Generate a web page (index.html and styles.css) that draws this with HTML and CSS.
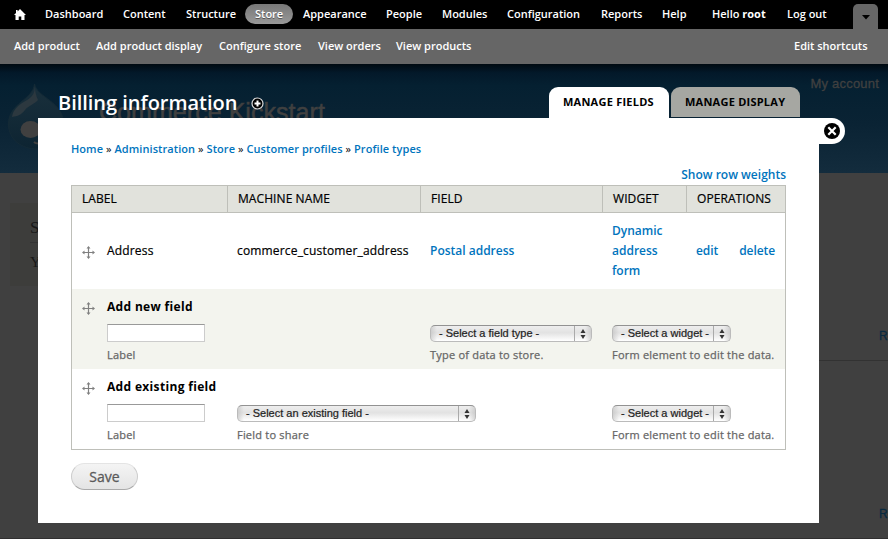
FILE: index.html
```html
<!DOCTYPE html>
<html lang="en">
<head>
<meta charset="utf-8">
<title>Billing information</title>
<link rel="stylesheet" href="styles.css">
</head>
<body>
<svg class="defs" width="0" height="0"><defs>
<symbol id="move" viewBox="0 0 13 13"><path d="M6.500 1v11M1 6.500h11" stroke="#808080" stroke-width="1.200"/><path d="M6.500 0l2 2.500h-4zM6.500 13l2-2.500h-4zM0 6.500l2.500-2v4zM13 6.500l-2.500-2v4z" fill="#808080"/></symbol>
<symbol id="arrows" viewBox="0 0 6 10"><path d="M3 0l2.500 4h-5zM3 10L.5 6h5z" fill="#333"/></symbol>
</defs></svg>
<div class="screen">
  <div class="site">
    <div class="site-header">
      <svg class="drop" width="60" height="74" viewBox="0 0 60 74">
        <defs><linearGradient id="dg" x1="0" y1="0" x2="0" y2="1"><stop offset="0" stop-color="#1a303c"/><stop offset="1" stop-color="#0d2432"/></linearGradient></defs>
        <path d="M28.500 3C31 17 58 20 58 45c0 15-12 23-27 23S2.500 59 2.500 43C2.500 22 27 19 28.500 3z" fill="url(#dg)" stroke="#142a36"/>
        <path d="M28.500 4c1 8-2 12-9 16C12 24 7 29 6 36c6-1 9-2 13-7 4-5 10-6 13-10-2-4-3-9-3.500-15z" fill="#2c383f"/>
        <ellipse cx="24.500" cy="48.500" rx="10" ry="8.500" fill="#404040"/>
        <path d="M28 61q3 3 10 0" stroke="#404040" stroke-width="2" fill="none"/>
      </svg>
      <span class="site-name">Commerce Kickstart</span>
      <span class="account">My account</span>
    </div>
    <div class="site-body">
      <div class="block"><div class="block-title">S</div><div class="block-text">Y</div></div>
      <div class="aside"><div class="aside-cell">Re</div><div class="aside-cell second">Re</div></div>
    </div>
  </div>

  <div class="front">
    <div class="menu">
      <span class="home"><svg width="12" height="11" viewBox="0 0 12 11"><path d="M6 0L12 6H10.500V11H7.300V7.500H4.700V11H1.500V6H0L2 4V1h1.600v1.400z" fill="#fff"/></svg></span>
      <span>Dashboard</span><span>Content</span><span>Structure</span><span class="active">Store</span><span>Appearance</span><span>People</span><span>Modules</span><span>Configuration</span><span>Reports</span><span>Help</span><span>Hello <b>root</b></span><span>Log out</span>
      <span class="toggle"><svg width="8" height="5" viewBox="0 0 8 5"><path d="M0 0h8L4 4.500z" fill="#000"/></svg></span>
    </div>
    <div class="shortcuts"><span>Add product</span><span>Add product display</span><span>Configure store</span><span>View orders</span><span>View products</span><span class="edit-shortcuts">Edit shortcuts</span></div>

    <div class="titlebar">
      <h1>Billing information</h1>
      <svg class="plus" width="13" height="13" viewBox="0 0 13 13"><circle cx="6.500" cy="6.500" r="5.500" fill="#000" stroke="#ddd" stroke-width="1.200"/><path d="M6.500 3.500v6M3.500 6.500h6" stroke="#fff" stroke-width="2"/></svg>
      <div class="tabs"><span class="tab current">MANAGE FIELDS</span><span class="tab other">MANAGE DISPLAY</span></div>
    </div>
    <div class="overlay">
      <div class="panel">
        <div class="crumbs"><a>Home</a> » <a>Administration</a> » <a>Store</a> » <a>Customer profiles</a> » <a>Profile types</a></div>
        <div class="weights"><a>Show row weights</a></div>
        <div class="table">
          <div class="row head"><div>LABEL</div><div>MACHINE NAME</div><div>FIELD</div><div>WIDGET</div><div>OPERATIONS</div></div>
          <div class="row first">
            <div class="lead"><svg class="move" width="13" height="13"><use href="#move"/></svg>Address</div>
            <div class="machine">commerce_customer_address</div><div><a>Postal address</a></div><div><a>Dynamic<br>address<br>form</a></div><div class="ops"><a>edit</a><a>delete</a></div>
          </div>
          <div class="row add even">
            <div class="lead"><svg class="move" width="13" height="13"><use href="#move"/></svg><div><b>Add new field</b><div class="input"></div><small>Label</small></div></div>
            <div></div>
            <div class="control"><div class="select type"><span>- Select a field type -</span><i><svg width="6" height="10"><use href="#arrows"/></svg></i></div><small>Type of data to store.</small></div>
            <div class="control wide"><div class="select widget"><span>- Select a widget -</span><i><svg width="6" height="10"><use href="#arrows"/></svg></i></div><small>Form element to edit the data.</small></div>
          </div>
          <div class="row add">
            <div class="lead"><svg class="move" width="13" height="13"><use href="#move"/></svg><div><b>Add existing field</b><div class="input"></div><small>Label</small></div></div>
            <div class="control existing-cell"><div class="select existing"><span>- Select an existing field -</span><i><svg width="6" height="10"><use href="#arrows"/></svg></i></div><small>Field to share</small></div>
            <div></div>
            <div class="control wide"><div class="select widget"><span>- Select a widget -</span><i><svg width="6" height="10"><use href="#arrows"/></svg></i></div><small>Form element to edit the data.</small></div>
          </div>
        </div>
        <div class="save">Save</div>
      </div>
      <div class="close"><svg width="16" height="16" viewBox="0 0 16 16"><circle cx="8" cy="8" r="8" fill="#000"/><path d="M4.300 4.300l7.400 7.400M11.700 4.300l-7.400 7.400" stroke="#fff" stroke-width="2.200"/></svg></div>
    </div>
  </div>
</div>
</body>
</html>
```
FILE: styles.css
```css
* { box-sizing: border-box; }
body { margin: 0; font-family: "Open Sans", "Noto Sans", sans-serif; color: #000; overflow: hidden; }
a { color: #0074bd; font-weight: 600; }
.defs { display: block; }
svg { display: block; flex: none; }
.screen { display: grid; width: 888px; height: 539px; overflow: hidden; background: #404040; }
.site, .front { grid-area: 1 / 1; min-width: 0; }

/* dimmed site behind the overlay */
.site { padding-top: 64px; font-family: "Liberation Sans", Arial, sans-serif; color: #404040; }
.site-header { height: 109px; display: flex; background: linear-gradient(#000a11 0, #03192a 9px, #052031 22px, #0a2334 60px, #132c3d 100%); }
.drop { margin: 17px 0 0 6px; }
.site-name { margin: 34px 0 0 33px; font-size: 25px; line-height: 28px; letter-spacing: .05px; -webkit-text-stroke: .5px #404040; }
.account { margin: 12px 9px 0 auto; font-size: 13px; line-height: 16px; letter-spacing: .2px; -webkit-text-stroke: .3px #404040; }
.site-body { display: flex; height: 366px; justify-content: space-between; border-bottom: 1px solid #302f30; }
.block { margin-top: 30px; margin-left: 10px; width: 60px; height: 83px; padding: 14px 0 0 20px; background: #3d3d3b; color: #181818; font-family: "Liberation Serif", serif; }
.block-title { font-size: 17px; line-height: 22px; height: 26px; border-bottom: 1px solid #333; }
.block-text { font-size: 15px; line-height: 18px; padding-top: 10px; }
.aside { width: 69px; font-size: 12px; line-height: 14px; color: #082a40; -webkit-text-stroke: .3px #082a40; }
.aside-cell { height: 188px; padding: 156px 0 0 60px; border-bottom: 1px solid #323232; }
.aside-cell.second { border: 0; padding-top: 146px; }

/* toolbar */
.menu { display: grid; grid-template-columns: 35px 78px 63px 69px 48px 83px 56px 65px 94px 61px 50px 75px 66px 35px; height: 29px; background: #000; color: #fff; font-size: 11px; line-height: 20px; font-weight: 600; white-space: nowrap; padding-top: 4px; }
.menu > span { padding-left: 10px; }
.menu > .home { padding: 5px 0 0 14px; }
.menu > .active { height: 20px; border-radius: 10px; background: linear-gradient(#777, #999); text-shadow: 0 1px #555; }
.menu > .toggle { width: 25px; height: 25px; margin-left: 10px; padding: 11px 0 0 9px; background: #666; border-radius: 5px 5px 0 0; }
.shortcuts { display: grid; grid-template-columns: 82px 123px 99px 78px 398px 94px; padding: 7px 0 0 14px; height: 35px; background: #666; color: #fff; font-size: 11px; line-height: 20px; font-weight: 600; white-space: nowrap; }

/* title and tabs */
.titlebar { display: flex; height: 54px; padding-left: 58px; color: #fff; }
h1 { width: 193px; margin: 25px 0 0; font-size: 20px; line-height: 28px; font-weight: 600; letter-spacing: -.03px; white-space: nowrap; }
.plus { margin-top: 33px; }
.tabs { display: flex; gap: 2px; margin: 23px 0 0 285px; color: #000; font-size: 11px; line-height: 30px; font-weight: 700; letter-spacing: .24px; white-space: nowrap; }
.tab { border-radius: 9px 9px 0 0; padding-left: 14px; }
.current { width: 120px; height: 31px; background: #fff; }
.other { width: 129px; height: 30px; background: #a6a7a2; }

/* panel */
.overlay { display: flex; align-items: flex-start; padding-left: 38px; }
.panel { width: 781px; height: 405px; padding: 22px 33px 0; background: #fff; }
.close { width: 26px; height: 26px; padding: 5px 0 0 5px; background: #fff; border-radius: 0 13px 13px 0; }
.crumbs { font-size: 11px; line-height: 18px; height: 26px; letter-spacing: .07px; white-space: nowrap; }
.weights { text-align: right; font-size: 12px; line-height: 18px; height: 19px; }
.table { width: 715px; height: 265px; border: 1px solid #bebfb9; font-size: 12px; }
.row { display: grid; grid-template-columns: 155px 193px 182px 84px 99px; }
.row > div { padding-left: 10px; min-width: 0; white-space: nowrap; }
.head { height: 27px; background: #e1e2dc; border-bottom: 1px solid #bebfb9; line-height: 26px; letter-spacing: .08px; -webkit-text-stroke: .2px #000; }
.head > div + div { border-left: 1px solid #bebfb9; }
.first { height: 76px; align-items: center; line-height: 20px; }
.first .lead, .machine { letter-spacing: .17px; -webkit-text-stroke: .2px #000; }
.lead { display: flex; gap: 12px; }
.move { margin-top: 5px; }
.ops { display: flex; gap: 21px; letter-spacing: -.08px; }
.add { height: 80px; }
.even { background: #f3f4ee; }
.add .lead { padding-top: 8px; }
b { font-weight: 700; }
.add b { display: block; line-height: 19px; height: 27px; letter-spacing: .33px; }
.input { width: 98px; height: 18px; background: #fff; border: 1px solid #ccc; border-top-color: #999; }
small { display: block; font-size: 11px; line-height: 16px; margin-top: 5px; color: #666; letter-spacing: .21px; -webkit-text-stroke: .25px #666; }
.control { padding-top: 36px; }
.select { display: flex; justify-content: space-between; height: 17px; border: 1px solid #bbb; border-top-color: #929292; border-radius: 5px; background: linear-gradient(90deg, #bbb8 0, #bbb0 6px, #bbb0 calc(100% - 6px), #bbb8 100%), linear-gradient(#eee, #e2e2e2 45%, #fff); color: #222; font: 11px/15px "Liberation Sans", Arial, sans-serif; padding-left: 8px; -webkit-text-stroke: .2px #222; }
.select i { width: 17px; border-left: 1px solid #aaa; padding: 3px 0 0 5px; }
.type { width: 162px; }
.widget { width: 119px; }
.existing { width: 239px; }
.save { width: 67px; height: 27px; margin-top: 13px; border: 1px solid #ddd; border-color: #e4e4e4 #ccc #aaa; border-radius: 14px; background: linear-gradient(#f4f4f4, #e4e4e4); color: #5a5a5a; font-size: 14px; line-height: 26px; text-align: center; -webkit-text-stroke: .3px #5a5a5a; }
```
